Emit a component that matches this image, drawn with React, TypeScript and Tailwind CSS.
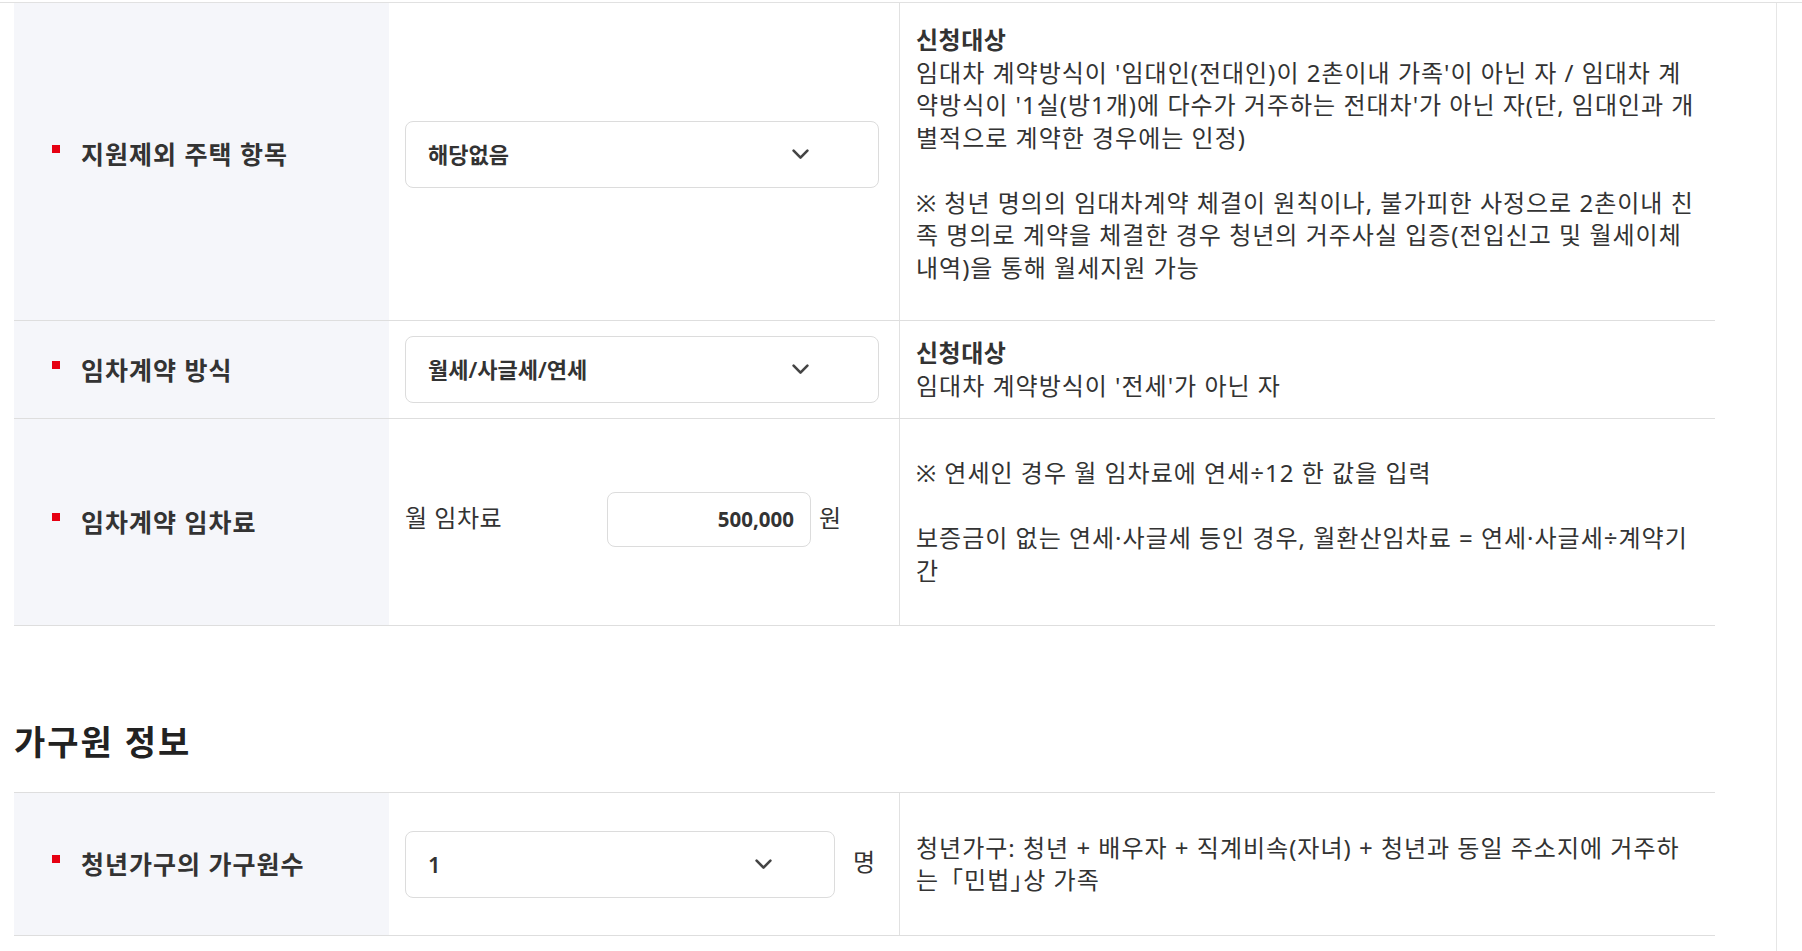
import React from "react";

function Chevron() {
  return (
    <svg width="17" height="11" viewBox="0 0 17 11" fill="none" className="shrink-0">
      <path d="M1.6 1.6 L8.5 8.6 L15.4 1.6" stroke="#444" strokeWidth="2.6" strokeLinecap="round" strokeLinejoin="round" />
    </svg>
  );
}

function Label({ text, extra = "" }: { text: string; extra?: string }) {
  return (
    <div className={`w-[375px] shrink-0 bg-[#f5f6fa] flex items-center pl-[38px] ${extra}`}>
      <span className="w-[8px] h-[8px] bg-[#e60012] mr-[21px] mb-[10px] shrink-0" />
      <span className="text-[25px] tracking-[1px] font-bold text-[#333] leading-[32px]">{text}</span>
    </div>
  );
}

function Line({ children }: { children?: React.ReactNode }) {
  return <div className="whitespace-nowrap h-[32.5px]">{children}</div>;
}

export default function App() {
  return (
    <div className="w-[1802px] h-[951px] overflow-hidden bg-white font-['Noto_Sans','Noto_Sans_CJK_KR',sans-serif] text-[#333]">
      <div className="mt-[2px] border-t border-[#e1e1e1] flex h-[949px]">
        <div className="w-[1777px] shrink-0 border-r border-[#e6e6e6] pl-[14px]">
          <div className="w-[1701px]">
            {/* Row 1 */}
            <div className="flex h-[318px] border-b border-[#dedede]">
              <Label text="지원제외 주택 항목" extra="pb-[15px]" />
              <div className="w-[510px] shrink-0 flex items-center pl-[16px] pb-[15px]">
                <div className="w-[474px] h-[67px] border border-[#dcdcdc] rounded-[8px] flex items-center justify-between pl-[22px] pr-[69px]">
                  <span className="text-[22px] font-semibold text-[#333]">해당없음</span>
                  <Chevron />
                </div>
              </div>
              <div className="flex-1 border-l border-[#e1e1e1] flex items-center pl-[16px] pb-[15px] text-[24px] tracking-[1px] leading-[32.5px]">
                <div>
                  <Line><b className="font-bold tracking-[0.5px]">신청대상</b></Line>
                  <Line>임대차 계약방식이 '임대인(전대인)이 2촌이내 가족'이 아닌 자 / 임대차 계</Line>
                  <Line>약방식이 '1실(방1개)에 다수가 거주하는 전대차'가 아닌 자(단, 임대인과 개</Line>
                  <Line>별적으로 계약한 경우에는 인정)</Line>
                  <Line />
                  <Line>※ 청년 명의의 임대차계약 체결이 원칙이나, 불가피한 사정으로 2촌이내 친</Line>
                  <Line>족 명의로 계약을 체결한 경우 청년의 거주사실 입증(전입신고 및 월세이체</Line>
                  <Line>내역)을 통해 월세지원 가능</Line>
                </div>
              </div>
            </div>

            {/* Row 2 */}
            <div className="flex h-[98px] border-b border-[#dedede]">
              <Label text="임차계약 방식" />
              <div className="w-[510px] shrink-0 flex items-center pl-[16px]">
                <div className="w-[474px] h-[67px] border border-[#dcdcdc] rounded-[8px] flex items-center justify-between pl-[22px] pr-[69px]">
                  <span className="text-[22px] font-semibold text-[#333]">월세/사글세/연세</span>
                  <Chevron />
                </div>
              </div>
              <div className="flex-1 border-l border-[#e1e1e1] flex items-center pl-[16px] text-[24px] tracking-[1px] leading-[32.5px]">
                <div>
                  <Line><b className="font-bold tracking-[0.5px]">신청대상</b></Line>
                  <Line>임대차 계약방식이 '전세'가 아닌 자</Line>
                </div>
              </div>
            </div>

            {/* Row 3 */}
            <div className="flex h-[207px] border-b border-[#dedede]">
              <Label text="임차계약 임차료" />
              <div className="w-[510px] shrink-0 flex items-center pl-[16px] pb-[5px]">
                <span className="w-[202px] shrink-0 text-[24px] tracking-[0.5px] pb-[4px]">월 임차료</span>
                <div className="w-[204px] h-[55px] border border-[#dcdcdc] rounded-[8px] flex items-center justify-end pr-[16px]">
                  <span className="text-[20.5px] font-bold text-[#333]">500,000</span>
                </div>
                <span className="ml-[8px] text-[24px] pb-[4px]">원</span>
              </div>
              <div className="flex-1 border-l border-[#e1e1e1] flex items-center pl-[16px] text-[24px] tracking-[1px] leading-[32.5px]">
                <div>
                  <Line>※ 연세인 경우 월 임차료에 연세÷12 한 값을 입력</Line>
                  <Line />
                  <Line>보증금이 없는 연세·사글세 등인 경우, 월환산임차료 = 연세·사글세÷계약기</Line>
                  <Line>간</Line>
                </div>
              </div>
            </div>

            {/* Heading */}
            <h2 className="mt-[96px] mb-[30px] text-[34px] tracking-[2px] leading-[40px] font-bold text-[#222]">가구원 정보</h2>

            {/* Row 4 */}
            <div className="flex h-[144px] border-t border-b border-[#dedede]">
              <Label text="청년가구의 가구원수" />
              <div className="w-[510px] shrink-0 flex items-center pl-[16px]">
                <div className="w-[430px] h-[67px] border border-[#dcdcdc] rounded-[8px] flex items-center justify-between pl-[22px] pr-[62px]">
                  <span className="text-[22px] font-semibold text-[#333]">1</span>
                  <Chevron />
                </div>
                <span className="ml-[18px] text-[24px] pb-[4px]">명</span>
              </div>
              <div className="flex-1 border-l border-[#e1e1e1] flex items-center pl-[16px] text-[24px] tracking-[1px] leading-[32.5px]">
                <div>
                  <Line>청년가구: 청년 + 배우자 + 직계비속(자녀) + 청년과 동일 주소지에 거주하</Line>
                  <Line>
                    는「민법<span className="[font-feature-settings:'halt']">」</span>상 가족
                  </Line>
                </div>
              </div>
            </div>
          </div>
        </div>
        <div className="flex-1" />
      </div>
    </div>
  );
}
